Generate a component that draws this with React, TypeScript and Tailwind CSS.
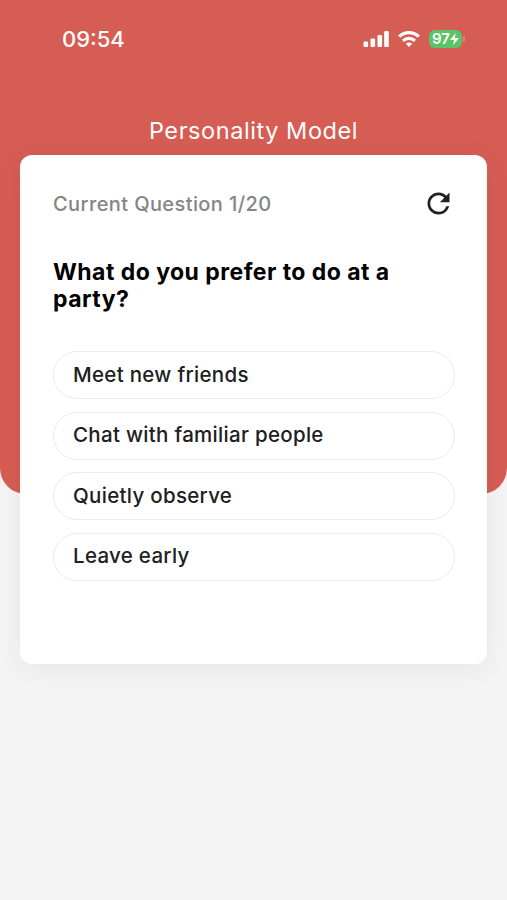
import { MdRefresh } from "react-icons/md"

const answers = [
  "Meet new friends",
  "Chat with familiar people",
  "Quietly observe",
  "Leave early",
]

function StatusBar() {
  return (
    <div className="flex h-[77px] items-center justify-between pl-[62px] pr-[42px] text-white">
      <span className="text-[22px] font-medium leading-none">09:54</span>
      <div className="flex items-center gap-[9px]">
        {/* Signal */}
        <svg width="26" height="16" viewBox="0 0 26 16" fill="currentColor">
          <rect x="0.5" y="10.5" width="4.6" height="5.5" rx="1.2" />
          <rect x="7.5" y="7.5" width="4.6" height="8.5" rx="1.2" />
          <rect x="14.5" y="4" width="4.6" height="12" rx="1.2" />
          <rect x="21.2" y="0" width="4.6" height="16" rx="1.2" />
        </svg>
        {/* Wi-Fi */}
        <svg width="22" height="16" viewBox="0 0 22 16" fill="none" stroke="currentColor" strokeWidth="3.2">
          <path d="M1.2 5.6a14 14 0 0 1 19.6 0" />
          <path d="M5 9.9a8.6 8.6 0 0 1 12 0" />
          <path d="M11 16l-3.1-3.2a4.4 4.4 0 0 1 6.2 0z" fill="currentColor" stroke="none" />
        </svg>
        {/* Battery */}
        <div className="flex items-center gap-px">
          <div className="flex h-[18px] w-[33px] items-center justify-center rounded-md bg-[#5ac466]">
            <span className="text-[15px] font-semibold leading-none">97</span>
            <svg width="9" height="12" viewBox="0 0 9 12" fill="currentColor">
              <path d="M5.5 0L0 7h4L3.2 12 9 5H5z" />
            </svg>
          </div>
          <div className="h-1.5 w-0.5 rounded-r-full bg-white/25" />
        </div>
      </div>
    </div>
  )
}

export default function App() {
  return (
    <div className="relative isolate h-[900px] w-full overflow-hidden bg-[#f4f4f4] font-['Inter',sans-serif]">
      <div className="absolute inset-x-0 top-0 -z-10 h-[494px] rounded-b-[26px] bg-[#d65d54]" />

      <StatusBar />
      <h1 className="flex h-[78px] items-end justify-center pb-[11px] text-[23.5px] leading-[26px] tracking-[0.57px] text-white">
        Personality Model
      </h1>

      {/* Question card */}
      <main className="mx-5 h-[509px] rounded-[12px] bg-white pl-[33px] pr-8 pt-[33px] shadow-[0_6px_30px_rgba(0,0,0,0.06)]">
        <div className="flex h-8 items-center justify-between">
          <span className="text-[20px] font-medium tracking-[0.4px] text-[#858585]">Current Question 1/20</span>
          <MdRefresh size={33} color="#222" className="-mt-px" />
        </div>
        <h2 className="mt-[39px] text-[23px] font-bold leading-[27px] tracking-[0.46px] text-black">
          What do you prefer to do at a party?
        </h2>
        <div className="mt-[38px] flex flex-col gap-[12.5px]">
          {answers.map((answer) => (
            <button
              key={answer}
              className="h-12 rounded-full border border-[#ececec] px-[19px] text-left text-[20.5px] font-medium tracking-[0.3px] text-[#202020]"
            >
              {answer}
            </button>
          ))}
        </div>
      </main>
    </div>
  )
}
